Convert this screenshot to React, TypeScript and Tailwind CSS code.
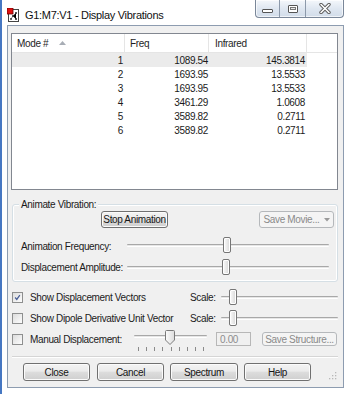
import React from "react"

const rows = [
  ["1", "1089.54", "145.3814"],
  ["2", "1693.95", "13.5533"],
  ["3", "1693.95", "13.5533"],
  ["4", "3461.29", "1.0608"],
  ["5", "3589.82", "0.2711"],
  ["6", "3589.82", "0.2711"],
]

const btn =
  "flex items-center justify-center rounded-[3px] border border-[#707070] bg-[linear-gradient(#f3f3f3,#ebebeb_45%,#dddddd_50%,#cfcfcf)] shadow-[inset_0_0_0_1px_#fbfbfb] text-[#151515]"
const btnOff =
  "flex items-center justify-center rounded-[3px] border border-[#b5b8bb] bg-[#f4f4f4] text-[#8a8a8a]"

function Thumb({ className }: { className: string }) {
  return (
    <div
      className={`absolute w-[8px] h-[16px] rounded-[2px] border border-[#767676] bg-[linear-gradient(90deg,#fbfbfb,#e6e6e6_60%,#d6d6d6)] shadow-[inset_0_0_0_1px_#ffffff] ${className}`}
    />
  )
}

function Track({ className }: { className: string }) {
  return <div className={`absolute left-0 right-0 h-[3px] rounded-[1px] border-t border-[#a8a8a8] border-b border-b-white bg-[#e6e6e6] ${className}`} />
}

function Check({ on }: { on?: boolean }) {
  return (
    <div className="w-[11px] h-[11px] border border-[#8e8f8f] bg-[linear-gradient(135deg,#dcdcdc,#fdfdfd)] p-px flex items-center justify-center">
      {on && (
        <svg width="9" height="9" viewBox="0 0 9 9">
          <path d="M1.5 4.5 L3.6 7 L7.5 1.5" fill="none" stroke="#4a5f97" strokeWidth="1.6" />
        </svg>
      )}
    </div>
  )
}

export default function App() {
  return (
    <div className="w-[350px] h-[394px] overflow-hidden relative border-l-[2px] border-l-[#4677c2] bg-[linear-gradient(90deg,#6f9bd6,#c9d9ee_35%,#e6eef7_70%,#dbe6f2)_bottom/100%_7px_no-repeat,linear-gradient(90deg,#a9c3e6,#e2ebf6_4%,#eef3f9_30%,#e4ecf6_70%,#d9e5f2)] font-['Liberation_Sans',Arial,sans-serif] text-[10px] tracking-[-0.35px] text-[#1b1b1b] select-none">
      {/* title bar */}
      <div className="h-[25px] flex items-start">
        <svg className="ml-[5px] mt-[8px]" width="13" height="14" viewBox="0 0 13 14">
          <rect x="1.5" y="1.5" width="10" height="12" fill="#fff" stroke="#444" />
          <rect x="0" y="0" width="6" height="6" fill="#e01010" stroke="#6a0000" strokeWidth="0.8" />
          <circle cx="9" cy="5" r="1" fill="#222" />
          <circle cx="6" cy="8" r="1" fill="#222" />
          <circle cx="9" cy="11" r="1" fill="#222" />
          <circle cx="4" cy="11" r="0.9" fill="#222" />
          <path d="M9 5 L6 8 L9 11 M6 8 L4 11" stroke="#333" strokeWidth="0.6" />
        </svg>
        <div className="ml-[5px] mt-[7px] text-[11px] tracking-[-0.3px] text-[#111]">G1:M7:V1 - Display Vibrations</div>
        <div className="ml-auto mr-[6px] flex h-[18px] rounded-b-[4px] border border-t-0 border-[#7a8799] bg-[linear-gradient(#f4f7fb,#dfe7f1_50%,#d2dce9)] shadow-[inset_0_0_0_1px_#ffffffaa] overflow-hidden">
          <div className="w-[24px] flex items-center justify-center border-r border-[#8c99aa]">
            <div className="mt-[4px] w-[11px] h-[4px] rounded-[1px] border border-[#555] bg-white" />
          </div>
          <div className="w-[26px] flex items-center justify-center border-r border-[#8c99aa]">
            <div className="w-[10px] h-[8px] rounded-[1px] border border-[#555] bg-white flex items-center justify-center">
              <div className="w-[6px] h-[3px] border border-[#777] bg-[#e8e8e8]" />
            </div>
          </div>
          <div className="w-[37px] flex items-center justify-center">
            <svg width="12" height="11" viewBox="0 0 12 11">
              <path d="M2 1.5 L10 9.5 M10 1.5 L2 9.5" stroke="#5a5a5a" strokeWidth="3.4" strokeLinecap="round" />
              <path d="M2 1.5 L10 9.5 M10 1.5 L2 9.5" stroke="#ffffff" strokeWidth="1.6" strokeLinecap="round" />
            </svg>
          </div>
        </div>
      </div>

      {/* client */}
      <div className="relative ml-[5px] mr-[6px] h-[363px] border border-[#8d9cb0] bg-[#f0f0f0] flex flex-col">
        {/* list view */}
        <div className="mt-[7px] ml-[3px] w-[327px] h-[157px] border border-[#828790] bg-white flex flex-col">
          <div className="h-[19px] flex items-stretch border-b border-[#e5e5e5] text-[#1e1e1e]">
            <div className="w-[113px] flex items-center pl-[5px] border-r border-[#e5e5e5]">
              Mode #
              <svg className="ml-[11px]" width="7" height="4" viewBox="0 0 7 4">
                <path d="M0 4 L3.5 0 L7 4 Z" fill="#a8adb5" />
              </svg>
            </div>
            <div className="w-[84px] flex items-center pl-[5px] border-r border-[#e5e5e5]">Freq</div>
            <div className="w-[98px] flex items-center pl-[6px] border-r border-[#e5e5e5]">Infrared</div>
            <div className="flex-1" />
          </div>
          {rows.map((r, i) => (
            <div key={i} className={`h-[14px] w-[295px] flex items-center ${i === 0 ? "bg-[#ebebeb]" : ""}`}>
              <div className="w-[111px] text-right">{r[0]}</div>
              <div className="w-[85px] text-right">{r[1]}</div>
              <div className="w-[97px] text-right">{r[2]}</div>
            </div>
          ))}
        </div>

        {/* group box */}
        <div className="relative mt-[14px] ml-[4px] w-[326px] h-[78px] rounded-[3px] border border-[#d5dfe5] shadow-[inset_0_0_0_1px_#ffffff] flex flex-col">
          <div className="absolute -top-[6px] left-[6px] px-[2px] bg-[#f0f0f0] leading-[12px]">Animate Vibration:</div>
          <div className="mt-[6px] flex">
            <div className={`${btn} ml-[88px] w-[67px] h-[17px] border-[#3c3c3c]`}>Stop Animation</div>
            <div className={`${btnOff} ml-auto mr-[3px] w-[75px] h-[17px] gap-[4px]`}>
              Save Movie...
              <svg width="6" height="4" viewBox="0 0 6 4">
                <path d="M0 0 L6 0 L3 3.5 Z" fill="#9a9a9a" />
              </svg>
            </div>
          </div>
          <div className="mt-[8px] h-[21px] flex items-center">
            <div className="ml-[8px] w-[106px]">Animation Frequency:</div>
            <div className="relative w-[202px] h-[21px]">
              <Track className="top-[8px]" />
              <Thumb className="top-[1px] left-[96px]" />
            </div>
          </div>
          <div className="h-[21px] flex items-center">
            <div className="ml-[8px] w-[106px]">Displacement Amplitude:</div>
            <div className="relative w-[202px] h-[21px]">
              <Track className="top-[9px]" />
              <Thumb className="top-[2px] left-[95px]" />
            </div>
          </div>
        </div>

        {/* option rows */}
        <div className="mt-[5px] h-[21px] flex items-center">
          <div className="ml-[4px]"><Check on /></div>
          <div className="ml-[7px] w-[160px]">Show Displacement Vectors</div>
          <div className="w-[31px]">Scale:</div>
          <div className="relative w-[117px] h-[21px]">
            <Track className="top-[9px]" />
            <Thumb className="top-[2px] left-[8px]" />
          </div>
        </div>
        <div className="h-[21px] flex items-center">
          <div className="ml-[4px]"><Check /></div>
          <div className="ml-[7px] w-[160px]">Show Dipole Derivative Unit Vector</div>
          <div className="w-[31px]">Scale:</div>
          <div className="relative w-[117px] h-[21px]">
            <Track className="top-[9px]" />
            <Thumb className="top-[2px] left-[8px]" />
          </div>
        </div>
        <div className="h-[20px] flex items-center">
          <div className="ml-[4px]"><Check /></div>
          <div className="ml-[7px] w-[104px]">Manual Displacement:</div>
          <div className="relative w-[73px] h-[20px]">
            <Track className="top-[6px]" />
            <svg className="absolute left-[31px] top-[1px]" width="10" height="15" viewBox="0 0 10 15">
              <defs>
                <linearGradient id="tg" x1="0" x2="1">
                  <stop offset="0" stopColor="#fcfcfc" />
                  <stop offset="1" stopColor="#dcdcdc" />
                </linearGradient>
              </defs>
              <path d="M0.5 1.5 Q0.5 0.5 1.5 0.5 L8.5 0.5 Q9.5 0.5 9.5 1.5 L9.5 10 L5 14.5 L0.5 10 Z" fill="url(#tg)" stroke="#7a7a7a" />
            </svg>
            <div className="absolute left-[4px] top-[18px] w-[66px] flex justify-between">
              {Array.from({ length: 9 }).map((_, i) => (
                <div key={i} className="w-px h-[4px] bg-[#8a8a8a]" />
              ))}
            </div>
          </div>
          <div className="ml-[9px] w-[35px] h-[14px] border border-[#b7b7b7] bg-[#f0f0f0] text-[#8d8d8d] flex items-center pl-[3px]">0.00</div>
          <div className={`${btnOff} ml-[11px] w-[75px] h-[14px]`}>Save Structure...</div>
        </div>

        <div className="mt-[7px] ml-[4px] w-[326px] border-t border-[#d5d5d5] border-b border-b-white" />

        <div className="mt-[5px] flex">
          <div className={`${btn} ml-[15px] w-[67px] h-[18px]`}>Close</div>
          <div className={`${btn} ml-[7px] w-[67px] h-[18px]`}>Cancel</div>
          <div className={`${btn} ml-[6px] w-[68px] h-[18px]`}>Spectrum</div>
          <div className={`${btn} ml-[6px] w-[67px] h-[18px]`}>Help</div>
        </div>

        <svg className="absolute right-[6px] bottom-[7px]" width="8" height="8" viewBox="0 0 8 8">
          <rect x="6" y="6" width="1.3" height="1.3" fill="#b8b8b8" />
          <rect x="3" y="6" width="1.3" height="1.3" fill="#b8b8b8" />
          <rect x="6" y="3" width="1.3" height="1.3" fill="#b8b8b8" />
          <rect x="0" y="6" width="1.3" height="1.3" fill="#b8b8b8" />
          <rect x="3" y="3" width="1.3" height="1.3" fill="#b8b8b8" />
          <rect x="6" y="0" width="1.3" height="1.3" fill="#b8b8b8" />
        </svg>
      </div>
    </div>
  )
}
